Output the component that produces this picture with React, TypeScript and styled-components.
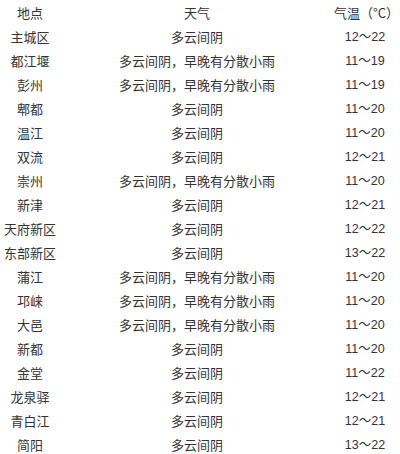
import React from "react"
import styled, { createGlobalStyle } from "styled-components"

const GlobalStyle = createGlobalStyle`
  html, body {
    margin: 0;
    padding: 0;
    background: #fff;
  }
  body {
    font-family: "Noto Sans CJK SC", "Liberation Sans", sans-serif;
    color: #333;
  }
`

const Table = styled.div`
  width: 400px;
  padding-top: 1px;
`

const Row = styled.div`
  display: grid;
  grid-template-columns: 60px 274px 62px;
  height: 24px;
  align-items: center;
  font-size: 13px;
  line-height: 24px;
`

const Cell = styled.div<{ $num?: boolean }>`
  text-align: center;
  white-space: nowrap;
  font-family: ${(p) =>
    p.$num
      ? `"Liberation Sans", "Noto Sans CJK SC", sans-serif`
      : `"Noto Sans CJK SC", sans-serif`};
  font-size: ${(p) => (p.$num ? "12.5px" : "13px")};
`

const rows: [string, string, string][] = [
  ["主城区", "多云间阴", "12～22"],
  ["都江堰", "多云间阴，早晚有分散小雨", "11～19"],
  ["彭州", "多云间阴，早晚有分散小雨", "11～19"],
  ["郫都", "多云间阴", "11～20"],
  ["温江", "多云间阴", "11～20"],
  ["双流", "多云间阴", "12～21"],
  ["崇州", "多云间阴，早晚有分散小雨", "11～20"],
  ["新津", "多云间阴", "12～21"],
  ["天府新区", "多云间阴", "12～22"],
  ["东部新区", "多云间阴", "13～22"],
  ["蒲江", "多云间阴，早晚有分散小雨", "11～20"],
  ["邛崃", "多云间阴，早晚有分散小雨", "11～20"],
  ["大邑", "多云间阴，早晚有分散小雨", "11～20"],
  ["新都", "多云间阴", "11～20"],
  ["金堂", "多云间阴", "11～22"],
  ["龙泉驿", "多云间阴", "12～21"],
  ["青白江", "多云间阴", "12～21"],
  ["简阳", "多云间阴", "13～22"],
]

export default function App() {
  return (
    <>
      <GlobalStyle />
      <Table>
        <Row>
          <Cell>地点</Cell>
          <Cell>天气</Cell>
          <Cell>气温（°C）</Cell>
        </Row>
        {rows.map(([place, weather, temp]) => (
          <Row key={place}>
            <Cell>{place}</Cell>
            <Cell>{weather}</Cell>
            <Cell $num>{temp}</Cell>
          </Row>
        ))}
      </Table>
    </>
  )
}
